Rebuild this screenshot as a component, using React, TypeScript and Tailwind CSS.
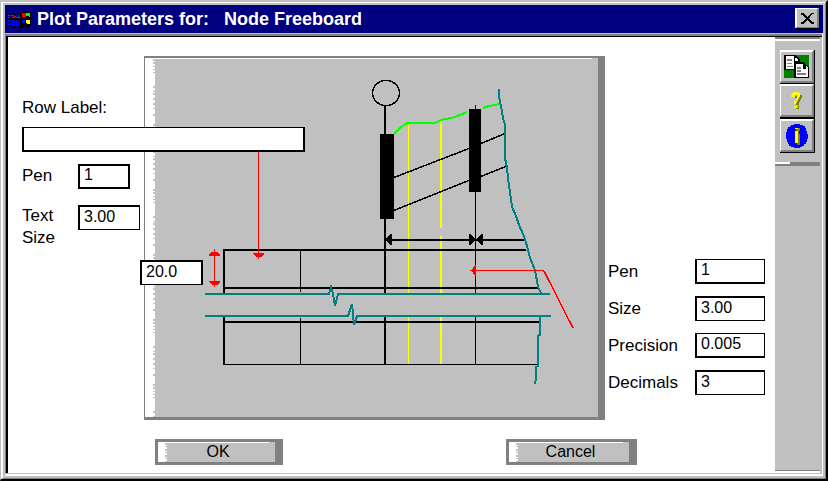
import React from "react";

type FieldProps = { id: string; label: React.ReactNode; value: string; edge: string };

const inputBase =
  "h-[25px] rounded-none border-black bg-white px-1 pb-[3px] text-[16px] leading-5 text-black outline-none";

function WindowIcon() {
  return (
    <svg width="23" height="17" viewBox="8 10 23 17" shapeRendering="crispEdges" aria-hidden="true">
      <path d="M20 12h2v-1h3v-1h4v1h2v14h-1v2h-2v-1h-4v1h-4z" fill="#000" />
      <path d="M9 12h2v2h-2zM13 12h2v2h-2zM17 12h2v2h-2zM8 17h3v1h-3zM12 17h3v2h-3zM16 17h3v2h-3zM9 21h2v1h-2zM13 22h2v1h-2zM17 22h2v1h-2zM9 24h2v1h-2zM13 25h2v2h-2zM17 25h2v2h-2z" fill="#000" />
      <path d="M8 14h2v1h-2zM11 14h3v1h-3zM14 15h2v1h-2zM16 16h3v1h-3zM8 16h2v1h-2zM12 16h3v1h-3zM19 15h1v2h-1z" fill="#f00" />
      <path d="M8 19h2v2h-2zM11 19h3v1h-3zM12 20h3v2h-3zM16 20h3v2h-3zM8 22h3v2h-3zM12 23h3v2h-3zM16 23h3v2h-3z" fill="#00f" />
      <path d="M22 12h4v4h-4z" fill="#f00" />
      <path d="M26 12h4v4h-1v-1h-3z" fill="#0f0" />
      <path d="M22 19h3v3h-3z" fill="#00f" />
      <path d="M26 19h4v4h-3v-1h-1z" fill="#ff0" />
    </svg>
  );
}

function CopyIcon() {
  return (
    <svg width="25" height="23" viewBox="0 0 25 23" shapeRendering="crispEdges" aria-hidden="true">
      <path d="M0 0h25v23H0z" fill="#008000" />
      <path d="M0 0h12v1h1v1h1v1h1v1h1v3h4v1h1v1h1v1h1v1h1v1h1v11H10v-8H0z" fill="#000" />
      <path d="M2 1h8v13H2zM11 3h2v1h1v2h-3zM12 9h7v5h5v8H12zM22 11h1v1h1v2h-2z" fill="#fff" />
      <path d="M3 4h5v2H3zM3 8h5v1H3zM3 11h6v1H3zM13 12h4v2h-4zM13 15h4v2h-4zM13 18h9v2h-9z" fill="#808080" />
    </svg>
  );
}

function HelpIcon() {
  return (
    <svg width="11" height="17" viewBox="0 0 11 17" shapeRendering="crispEdges" aria-hidden="true">
      <path d="M3 1h6v2h2v3h-1v2H9v2H8v3H5v-2h1V9h1V6H4V4h1V2h1zM5 14h3v3H5z" fill="#808000" />
      <path d="M2 0h6v1h1v4H8v2H7v1H6v2H5v2H3V9h2V7h1V3H4v2H0V3h1V1h1zM3 14h3v1h1v1H3z" fill="#ff0" />
    </svg>
  );
}

function InfoIcon() {
  return (
    <svg width="22" height="24" viewBox="0 0 22 24" shapeRendering="crispEdges" aria-hidden="true">
      <path d="M8 0h6v1h3v1h2v2h1v3h1v3h1v5h-1v3h-1v2h-2v2h-2v1h-2v1H8v-1H5v-1H3v-2H2v-2H1v-3H0V8h1V5h1V3h2V2h1V1h3z" fill="#00f" />
      <path d="M10 4h4v3h-1v3h1v11h-3V7h-1z" fill="#808000" />
      <path d="M9 4h3v1H9zM9 7h3v12H9z" fill="#ff0" />
    </svg>
  );
}

function ToolButton({ label, size, children }: { label: string; size: string; children: React.ReactNode }) {
  return (
    <button type="button" aria-label={label} className={`${size} w-[35px] border-r border-black bg-[#c0c0c0]`}>
      <span className="flex h-full w-full items-center justify-center border-t-2 border-r-2 border-b-2 border-l border-t-white border-r-[#808080] border-b-[#808080] border-l-white">
        {children}
      </span>
    </button>
  );
}

function Diagram() {
  return (
    <svg
      className="block"
      width="453"
      height="359"
      viewBox="145 58 453 359"
      shapeRendering="crispEdges"
      fill="none"
      role="img"
      aria-label="Plot row layout"
    >
      <path d="M145 58h447v1H155v358H145z" fill="#fff" />
      <path
        d="M154 59V417"
        stroke="#c0c0c0"
        strokeWidth="2"
        strokeDasharray="2 1 2 2 1 2 1 2 1 13 2 3 1 1 2 3 2 3 2 3 1 5 2 8"
      />

      <g stroke="#ff0">
        <path d="M408.5 123V293M408.5 317V364" />
        <path d="M441 120V228M441 236V293M441 317V364" strokeWidth="2" />
      </g>

      <g stroke="#000">
        <path d="M300.5 250V292M300.5 318V364M475.5 105V293M475.5 317V364M223 364.5H537" />
        <path
          d="M223 250H526M224 288H539M224 322H539M224 249V293M224 317V365M385 106V293M385 317V364M387 240H525"
          strokeWidth="2"
        />
        <ellipse cx="386" cy="93" rx="13.5" ry="12.5" strokeWidth="1.5" />
        <path d="M394 177.5L469 148.5M481 143.5L505 133.5M394 210.5L469 180.5M481 176.5L506 166.5" strokeWidth="1.5" />
      </g>
      <path
        d="M380 134h14v85h-14zM469 109h12v83h-12zM386 239l4-5h2v11h-2l-4-4zM475 239l-5-5h-1v11h1l5-4zM477 239l4-5h2v11h-2l-4-4z"
        fill="#000"
      />

      <path d="M394 134L400 128L408 122.5H436L441 120L455 117L467 112M483 108L489 106L500 104" stroke="#0f0" strokeWidth="2" />

      <g stroke="#008080" strokeWidth="2">
        <path d="M205 294H329L331 287L333 294L335 306L338 294H550" />
        <path d="M205 316H348L352 304L354 325L357 316H551" />
        <path d="M499 89V96L501 106L503 118L505 125V158L507 168L508 178L510 192L512 207L516 216L519 225L524 236L527 246L530 258L535 270L538 287L541 293" />
        <path d="M539.5 317V335L538 336V366L536 367V378L535 384" />
      </g>

      <g stroke="#f00">
        <path d="M258.5 151V255M214.5 252V285M474 270.5H544" />
        <path d="M544 271L573 328" strokeWidth="1.5" />
      </g>
      <path
        d="M253 253h11v1l-3 3h-2v2h-1v-2h-2l-3-3zM209 256v-2l3-2h2v-3h1v3h2l3 2v2zM209 281h11v1l-3 3h-2v2h-1v-2h-2l-3-3zM470 270h2l3-5h1v11h-1l-3-5h-2z"
        fill="#f00"
      />
    </svg>
  );
}

function RightField({ id, label, value, edge }: FieldProps) {
  return (
    <div className="flex items-center">
      <label htmlFor={id} className="w-[87px] text-[17px] leading-5">
        {label}
      </label>
      <input id={id} defaultValue={value} className={`w-[70px] ${edge} ${inputBase}`} />
    </div>
  );
}

function DialogButton({ children, width }: { children: React.ReactNode; width: string }) {
  return (
    <button type="button" className={`h-[26px] ${width} border-t-3 border-r-8 border-b-3 border-l-3 border-[#808080] bg-[#c0c0c0] text-[16px] leading-4`}>
      <span className="flex h-full">
        <span className="w-[9px] shrink-0 bg-white">
          <svg className="block h-full w-full" viewBox="0 0 9 20" shapeRendering="crispEdges" aria-hidden="true">
            <path d="M8 1V20" stroke="#c0c0c0" strokeWidth="2" strokeDasharray="2 1 1 2" />
          </svg>
        </span>
        <span className="mr-1.5 flex-1 border-t border-white pt-px">{children}</span>
      </span>
    </button>
  );
}

const plotFields: FieldProps[] = [
  { id: "value-pen", label: "Pen", value: "1", edge: "border border-b-2 border-l-2" },
  { id: "value-size", label: "Size", value: "3.00", edge: "border border-t-2 border-l-2" },
  { id: "value-precision", label: "Precision", value: "0.005", edge: "border border-b-2 border-l-2" },
  { id: "value-decimals", label: "Decimals", value: "3", edge: "border border-t-2 border-l-2" },
];

export default function App() {
  return (
    <div className="w-full border-t-2 border-r-2 border-b-2 border-l border-t-[#c0c0c0] border-r-black border-b-black border-l-[#c0c0c0] font-['Liberation_Sans',Arial,sans-serif] text-black">
      <div className="border-t border-r border-b border-l-2 border-t-white border-r-[#808080] border-b-[#808080] border-l-white">
        <div className="border-2 border-[#c0c0c0]">
          <header className="flex h-7 items-center bg-[#000080] px-[3px]">
            <WindowIcon />
            <h1 className="ml-1.5 flex-1 whitespace-pre text-[18px] leading-6 font-bold text-white">
              {"Plot Parameters for:   Node Freeboard"}
            </h1>
            <button
              type="button"
              aria-label="Close"
              className="h-[22px] w-[25px] border-r border-b-2 border-black bg-[#c0c0c0]"
            >
              <span className="flex h-full w-full items-center justify-center border-t border-r-2 border-b border-l-2 border-t-white border-r-[#808080] border-b-[#808080] border-l-white">
                <svg width="13" height="11" viewBox="0 0 13 11" shapeRendering="crispEdges" aria-hidden="true">
                  <path d="M0 0h3v1h1v1h1v1h1v1h1V3h1V2h1V1h1V0h3v1h-2v1h-1v1h-1v1H9v1H8v1h1v1h1v1h1v1h2v2h-3v-1H9V9H8V8H7V7H6v1H5v1H4v1H3v1H0V9h2V8h1V7h1V6h1V5H4V4H3V3H2V2H0z" fill="#000" />
                </svg>
              </span>
            </button>
          </header>

          <div className="border-t border-r border-b-2 border-t-[#c0c0c0] border-r-white border-b-white">
            <div className="border-t-2 border-b border-l border-t-[#808080] border-b-[#c0c0c0] border-l-[#808080]">
              <div className="flex border-t border-l-2 border-black bg-white">
                <main className="min-w-0 flex-1 pt-[19px] pb-2">
                  <form>
                    <div className="flex">
                      <section className="relative z-10 w-[136px] shrink-0 pt-[42px] pl-[14px] text-[17px]">
                        <label htmlFor="row-label" className="block leading-5">
                          Row Label:
                        </label>
                        <input id="row-label" defaultValue="" className={`mt-[9px] block w-[283px] border-2 border-t ${inputBase}`} />
                        <div className="mt-3 flex items-center">
                          <label htmlFor="label-pen" className="w-14 pb-0.5 leading-5">
                            Pen
                          </label>
                          <input id="label-pen" defaultValue="1" className={`w-[52px] border-2 ${inputBase}`} />
                        </div>
                        <div className="mt-4 flex items-start">
                          <label htmlFor="label-size" className="w-14 leading-[22px]">
                            Text
                            <br />
                            Size
                          </label>
                          <input id="label-size" defaultValue="3.00" className={`w-[62px] border border-t-2 border-l-2 ${inputBase}`} />
                        </div>
                      </section>

                      <section className="relative shrink-0 border-t-2 border-r-7 border-b-3 border-l border-[#808080] bg-[#c0c0c0]">
                        <Diagram />
                        <input
                          aria-label="Row height"
                          defaultValue="20.0"
                          className={`absolute top-[202px] -left-[5px] w-[63px] border-2 border-b ${inputBase}`}
                        />
                      </section>

                      <section className="flex flex-col gap-3 pt-[203px] pl-[3px]">
                        {plotFields.map((field) => (
                          <RightField key={field.id} {...field} />
                        ))}
                      </section>
                    </div>

                    <div className="mt-[19px] flex gap-[223px] pl-[147px]">
                      <DialogButton width="w-32">OK</DialogButton>
                      <DialogButton width="w-[131px]">Cancel</DialogButton>
                    </div>
                  </form>
                </main>

                <aside className="flex w-[47px] shrink-0 flex-col bg-[#c0c0c0] pr-0.5">
                  <div className="h-1 border-t-2 border-b-2 border-t-[#808080] border-b-white" />
                  <div className="mt-[9px] flex flex-col pl-[5px]">
                    <ToolButton label="Copy" size="h-[34px] border-b">
                      <CopyIcon />
                    </ToolButton>
                    <ToolButton label="Help" size="h-[35px] border-b-2">
                      <HelpIcon />
                    </ToolButton>
                    <ToolButton label="Information" size="h-[34px] border-b">
                      <InfoIcon />
                    </ToolButton>
                  </div>
                  <div className="mt-[9px] h-1 bg-[#808080]">
                    <div className="h-0.5 w-[15px] bg-white" />
                  </div>
                  <div className="mt-auto h-[3px] border-t border-[#808080] bg-white" />
                </aside>
              </div>
            </div>
          </div>
        </div>
      </div>
    </div>
  );
}
